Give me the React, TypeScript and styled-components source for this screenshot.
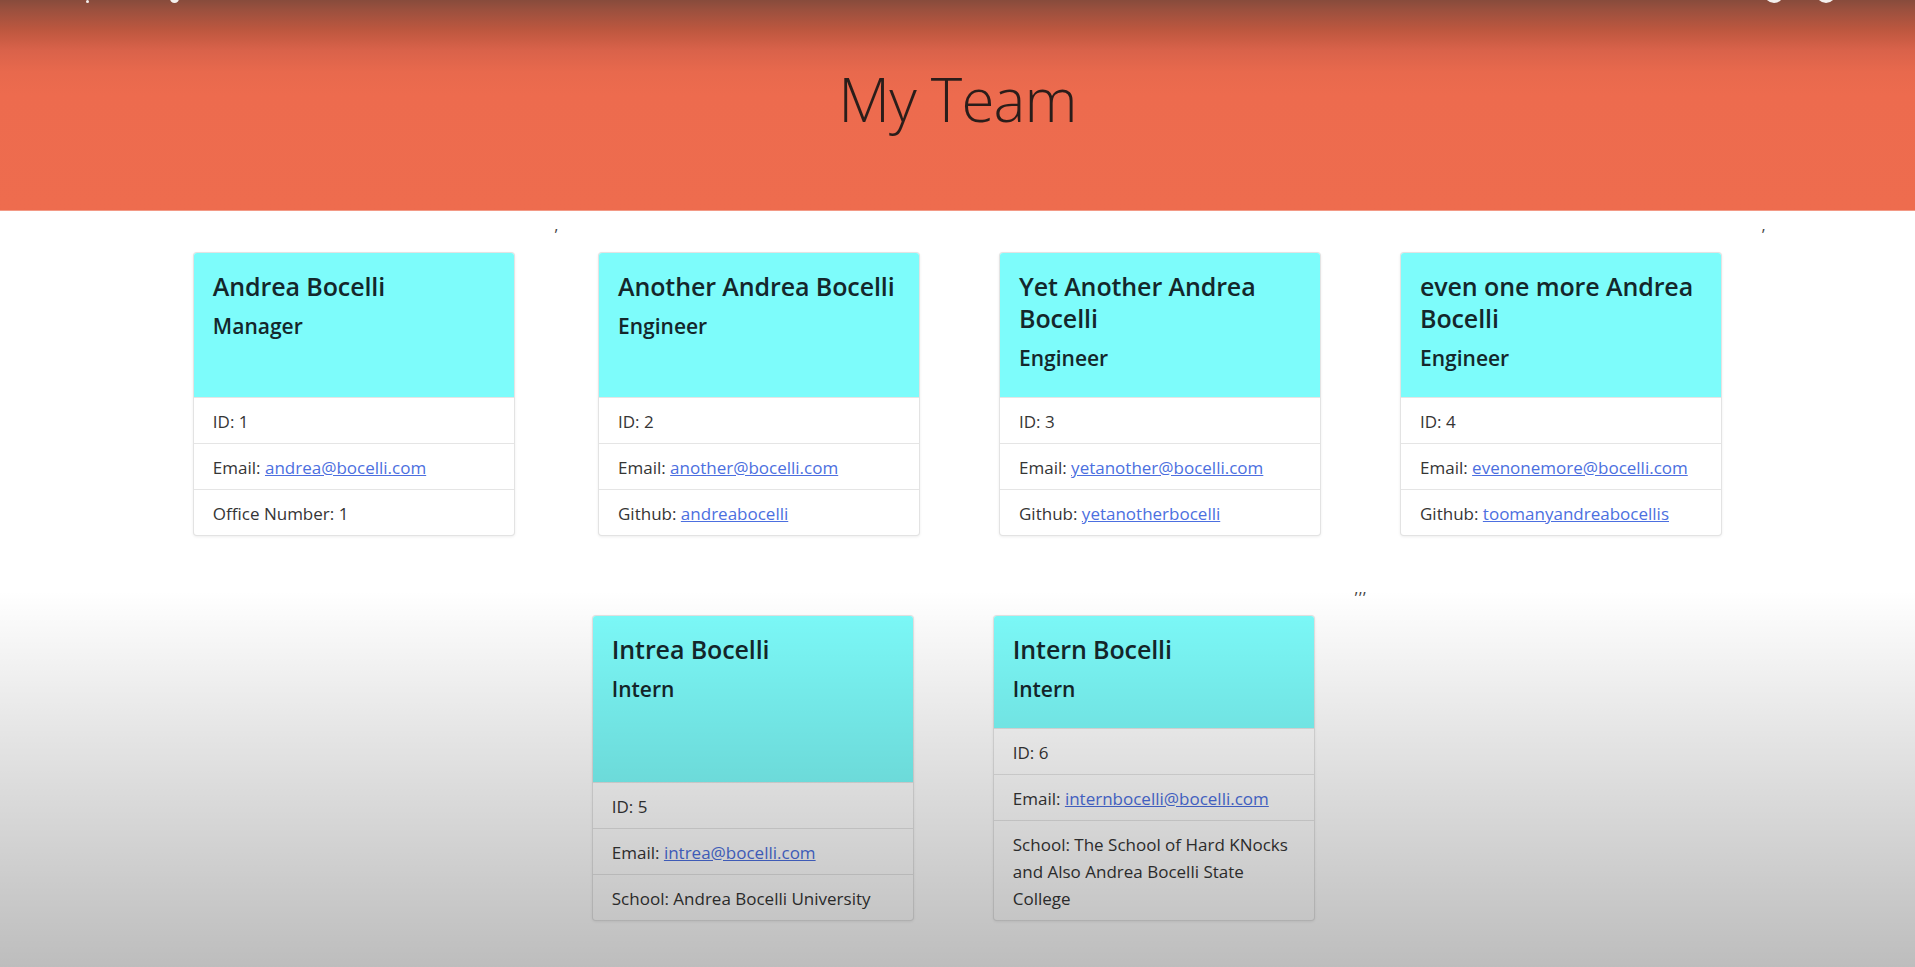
import React from "react";
import styled, { createGlobalStyle } from "styled-components";

const GlobalStyle = createGlobalStyle`
  html, body { margin: 0; padding: 0; background: #ffffff; }
  body {
    font-family: "Open Sans", "Noto Sans", sans-serif;
    color: #212529;
    overflow: hidden;
  }
  * { box-sizing: border-box; }
`;

const Page = styled.div`
  position: relative;
  width: 1915px;
  height: 967px;
  overflow: hidden;
  background: #ffffff;
`;

const Jumbotron = styled.header`
  height: 211px;
  display: flex;
  justify-content: center;
  align-items: flex-start;
  padding-top: 68px;
  background: linear-gradient(
    to bottom,
    #874b3c 0px,
    #9b503e 10px,
    #bd573f 30px,
    #d9624a 50px,
    #e8694d 72px,
    #ed6b4e 95px,
    #ee6c4e 100%
  );
  border-bottom: 1px solid #f39a86;
`;

const Title = styled.h1`
  margin: 0;
  font-family: "Open Sans", "Noto Sans", sans-serif;
  font-weight: 300;
  font-size: 60px;
  line-height: 62px;
  color: #2a1d1a;
  letter-spacing: -0.8px;
`;

const Team = styled.main`
  display: flex;
  flex-wrap: wrap;
  justify-content: center;
  align-items: stretch;
  padding: 1px 0 0 4px;
  font-size: 16px;
  line-height: 26px;
`;

const Separator = styled.span`
  color: #444;
  font-size: 16px;
  line-height: 26px;
`;

const Card = styled.article`
  width: 322px;
  margin: 39.5px;
  display: flex;
  flex-direction: column;
  background: #ffffff;
  border: 1px solid rgba(0, 0, 0, 0.11);
  border-radius: 4px;
  overflow: hidden;
  box-shadow: 0 1px 3px rgba(0, 0, 0, 0.07);
`;

const CardHeader = styled.div`
  flex: 1 0 auto;
  background: #7dfcfb;
  padding: 17px 10px 24px 19px;
`;

const Name = styled.h2`
  margin: 0 0 10px;
  font-size: 25px;
  font-weight: 600;
  line-height: 32px;
  color: #14272b;
  letter-spacing: -0.1px;
`;

const Role = styled.h3`
  margin: 0;
  font-size: 21px;
  font-weight: 600;
  line-height: 29px;
  color: #14272b;
`;

const InfoList = styled.ul`
  list-style: none;
  margin: 0;
  padding: 0;
`;

const InfoItem = styled.li`
  padding: 10px 19px 8px;
  border-top: 1px solid rgba(0, 0, 0, 0.1);
  font-size: 17px;
  line-height: 27px;
  color: #353535;
`;

const MailLink = styled.a`
  color: #4c6fe0;
  text-decoration: underline;
`;

const BottomShade = styled.div`
  position: absolute;
  left: 0;
  right: 0;
  top: 590px;
  bottom: 0;
  pointer-events: none;
  background: linear-gradient(to bottom, rgba(0, 0, 0, 0) 0%, rgba(0, 0, 0, 0.1) 38%, rgba(0, 0, 0, 0.26) 100%);
`;

const ChromeBit = styled.span<{ $x: number; $w: number }>`
  position: absolute;
  top: ${(p) => -p.$w + 3}px;
  left: ${(p) => p.$x}px;
  width: ${(p) => p.$w}px;
  height: ${(p) => p.$w}px;
  background: #f4f0ee;
  border-radius: 50%;
  pointer-events: none;
`;

type Member = {
  name: string;
  role: string;
  id: number;
  email: string;
  extraLabel: string;
  extraValue: string;
  extraIsLink?: boolean;
};

const members: Member[] = [
  { name: "Andrea Bocelli", role: "Manager", id: 1, email: "andrea@bocelli.com", extraLabel: "Office Number", extraValue: "1" },
  { name: "Another Andrea Bocelli", role: "Engineer", id: 2, email: "another@bocelli.com", extraLabel: "Github", extraValue: "andreabocelli", extraIsLink: true },
  { name: "Yet Another Andrea Bocelli", role: "Engineer", id: 3, email: "yetanother@bocelli.com", extraLabel: "Github", extraValue: "yetanotherbocelli", extraIsLink: true },
  { name: "even one more Andrea Bocelli", role: "Engineer", id: 4, email: "evenonemore@bocelli.com", extraLabel: "Github", extraValue: "toomanyandreabocellis", extraIsLink: true },
  { name: "Intrea Bocelli", role: "Intern", id: 5, email: "intrea@bocelli.com", extraLabel: "School", extraValue: "Andrea Bocelli University" },
  { name: "Intern Bocelli", role: "Intern", id: 6, email: "internbocelli@bocelli.com", extraLabel: "School", extraValue: "The School of Hard KNocks and Also Andrea Bocelli State College" },
];

function MemberCard({ m }: { m: Member }) {
  return (
    <Card>
      <CardHeader>
        <Name>{m.name}</Name>
        <Role>{m.role}</Role>
      </CardHeader>
      <InfoList>
        <InfoItem>ID: {m.id}</InfoItem>
        <InfoItem>
          Email: <MailLink href={`mailto:${m.email}`}>{m.email}</MailLink>
        </InfoItem>
        <InfoItem>
          {m.extraLabel}:{" "}
          {m.extraIsLink ? (
            <MailLink href={`https://github.com/${m.extraValue}`}>{m.extraValue}</MailLink>
          ) : (
            m.extraValue
          )}
        </InfoItem>
      </InfoList>
    </Card>
  );
}

export default function App() {
  return (
    <Page>
      <GlobalStyle />
      <Jumbotron>
        <Title>My Team</Title>
      </Jumbotron>
      <Team>
        <MemberCard m={members[0]} />
        <Separator>,</Separator>
        <MemberCard m={members[1]} />
        <MemberCard m={members[2]} />
        <MemberCard m={members[3]} />
        <Separator>,</Separator>
        <MemberCard m={members[4]} />
        <MemberCard m={members[5]} />
        <Separator>,,,</Separator>
      </Team>
      <BottomShade />
      <ChromeBit $x={86} $w={3} />
      <ChromeBit $x={170} $w={9} />
      <ChromeBit $x={1764} $w={20} />
      <ChromeBit $x={1816} $w={20} />
    </Page>
  );
}
